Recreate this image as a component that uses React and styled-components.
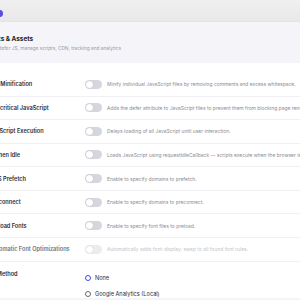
import styled, { createGlobalStyle } from 'styled-components';

const GlobalStyle = createGlobalStyle`
  html, body {
    margin: 0;
    padding: 0;
    background: #f4f4f9;
    overflow: hidden;
  }
  body {
    font-family: Inter, 'Noto Sans', sans-serif;
    color: #22222c;
  }
`;

const TopBar = styled.header`
  height: 22px;
  box-sizing: border-box;
  display: flex;
  align-items: flex-end;
  padding-bottom: 4px;
  background: linear-gradient(#f0f0f0, #e8e8e8);
  border-bottom: 1px solid #e3e3e6;
`;

const Logo = styled.span`
  width: 7px;
  height: 7px;
  margin-left: -4px;
  border-radius: 50%;
  background: #5b4de3;
`;

const Main = styled.main`
  margin-left: -30px;
`;

const Heading = styled.div`
  padding: 13px 0 0 12px;
  height: 41px;
  box-sizing: border-box;
`;

const Title = styled.h1`
  margin: 0;
  font-size: 6.4px;
  font-weight: 700;
  line-height: 8px;
  color: #1d1d27;
`;

const Subtitle = styled.p`
  margin: 2px 0 0;
  font-size: 4.8px;
  line-height: 6px;
  color: #9a9aa6;
  white-space: nowrap;
`;

const Card = styled.section`
  background: #fff;
  padding-top: 10px;
`;

const Row = styled.div`
  display: grid;
  grid-template-columns: 110px 17px 1fr;
  column-gap: 5px;
  align-items: center;
  height: 23.57px;
  box-sizing: border-box;
  border-bottom: 1px solid #f0f0f4;
`;

const Label = styled.div`
  font-size: 5.6px;
  font-weight: 600;
  white-space: nowrap;
  color: ${(p) => (p.$muted ? '#70707c' : '#2a2a34')};
`;

const Desc = styled.div`
  font-size: 4.95px;
  white-space: nowrap;
  color: ${(p) => (p.$muted ? '#c4c4cc' : '#8b8b96')};
`;

const Toggle = styled.span`
  display: flex;
  align-items: center;
  width: 17px;
  height: 9px;
  box-sizing: border-box;
  padding: 1px;
  border-radius: 5px;
  background: ${(p) => (p.$disabled ? '#ebebf0' : '#d6d6de')};
  &::after {
    content: '';
    width: 7px;
    height: 7px;
    border-radius: 50%;
    background: #fff;
    box-shadow: 0 0 1px rgba(0, 0, 0, 0.25);
  }
`;

const MethodRow = styled.div`
  display: grid;
  grid-template-columns: 110px 1fr;
  column-gap: 5px;
  padding-top: 9px;
`;

const Options = styled.div`
  display: flex;
  flex-direction: column;
  gap: 9px;
  padding-top: 4px;
`;

const Option = styled.label`
  display: flex;
  align-items: center;
  gap: 4px;
  font-size: 5.6px;
  line-height: 7px;
  color: #2a2a34;
  white-space: nowrap;
`;

const Radio = styled.span`
  width: 6px;
  height: 6px;
  box-sizing: border-box;
  border-radius: 50%;
  background: #fff;
  border: ${(p) => (p.$checked ? '1.8px solid #3f4fe0' : '0.6px solid #6a6a74')};
`;

const settings = [
  ['JavaScript Minification', 'Minify individual JavaScript files by removing comments and excess whitespace.'],
  ['Defer Non-critical JavaScript', 'Adds the defer attribute to JavaScript files to prevent them from blocking page rendering.'],
  ['Delay JavaScript Execution', 'Delays loading of all JavaScript until user interaction.'],
  ['Load JS When Idle', 'Loads JavaScript using requestIdleCallback — scripts execute when the browser is idle.'],
  ['Enable DNS Prefetch', 'Enable to specify domains to prefetch.'],
  ['Enable Preconnect', 'Enable to specify domains to preconnect.'],
  ['Enable Preload Fonts', 'Enable to specify font files to preload.'],
  ['Enable Automatic Font Optimizations', 'Automatically adds font-display: swap to all found font rules.', true],
];

export default function App() {
  return (
    <>
      <GlobalStyle />
      <TopBar>
        <Logo />
      </TopBar>
      <Main>
        <Heading>
          <Title>Scripts &amp; Assets</Title>
          <Subtitle>Minify, defer JS, manage scripts, CDN, tracking and analytics</Subtitle>
        </Heading>
        <Card>
          {settings.map(([label, desc, disabled]) => (
            <Row key={label}>
              <Label $muted={disabled}>{label}</Label>
              <Toggle $disabled={disabled} />
              <Desc $muted={disabled}>{desc}</Desc>
            </Row>
          ))}
          <MethodRow>
            <Label>Analytics Method</Label>
            <Options>
              <Option><Radio $checked />None</Option>
              <Option><Radio />Google Analytics (Local)</Option>
            </Options>
          </MethodRow>
        </Card>
      </Main>
    </>
  );
}
